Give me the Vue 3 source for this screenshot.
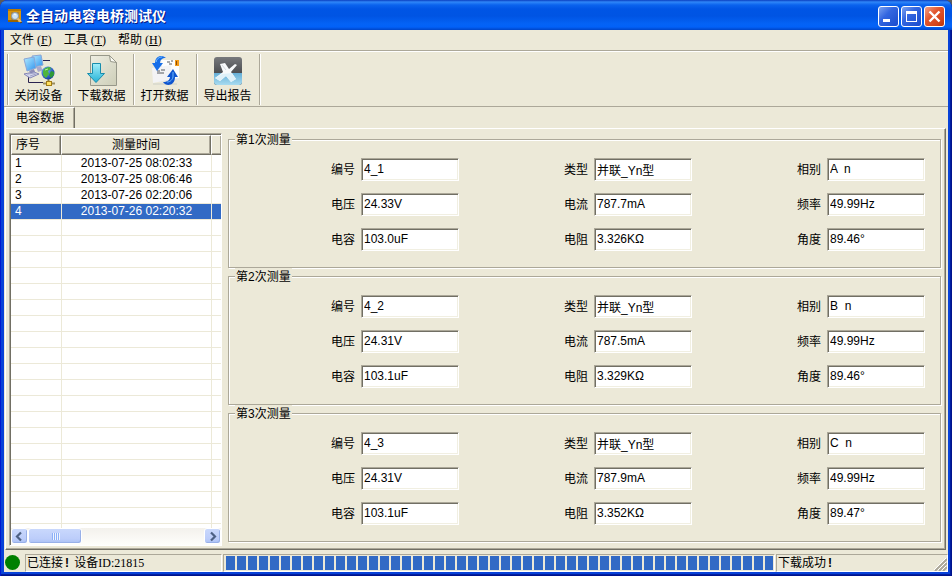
<script setup>
import { ref } from 'vue'

const menus = [
  { name: '文件', key: 'F' },
  { name: '工具', key: 'T' },
  { name: '帮助', key: 'H' },
]

const records = [
  { id: 1, time: '2013-07-25 08:02:33' },
  { id: 2, time: '2013-07-25 08:06:46' },
  { id: 3, time: '2013-07-26 02:20:06' },
  { id: 4, time: '2013-07-26 02:20:32' },
]
const selected = ref(4)

const labels = ['编号', '类型', '相别', '电压', '电流', '频率', '电容', '电阻', '角度']
const groups = ref([
  { n: 1, values: ['4_1', '并联_Yn型', 'A  n', '24.33V', '787.7mA', '49.99Hz', '103.0uF', '3.326KΩ', '89.46°'] },
  { n: 2, values: ['4_2', '并联_Yn型', 'B  n', '24.31V', '787.5mA', '49.99Hz', '103.1uF', '3.329KΩ', '89.46°'] },
  { n: 3, values: ['4_3', '并联_Yn型', 'C  n', '24.31V', '787.9mA', '49.99Hz', '103.1uF', '3.352KΩ', '89.47°'] },
])
</script>

<template>
  <div class="window">
    <header class="titlebar">
      <svg class="app-icon" width="16" height="16" viewBox="0 0 16 16">
        <path d="M1 1h13v13H1z" fill="#d8960c" />
        <path d="M1 1h13v2H1z" fill="#b87a04" />
        <path d="M1 12h10v2H1z" fill="#9c6400" />
        <path d="M4 4h8v8H4z" fill="#b0843a" />
        <circle cx="8" cy="8" r="3.500" fill="#cfe4f4" stroke="#8c98a2" />
        <path d="M7 6l2 1" stroke="#fff" />
        <path d="M10.500 10.500l4 4" stroke="#e9bd74" stroke-width="2" />
        <path d="M13 15l2-1" stroke="#4a3008" />
      </svg>
      <h1>全自动电容电桥测试仪</h1>
      <div class="caption-buttons">
        <button class="cap" aria-label="最小化">
          <svg width="19" height="19" viewBox="0 0 19 19"><path d="M4 12h7v3H4z" fill="#fff" /></svg>
        </button>
        <button class="cap" aria-label="最大化">
          <svg width="19" height="19" viewBox="0 0 19 19"><path d="M4 4h11v11H4zM5 7v7h9V7z" fill="#fff" fill-rule="evenodd" /></svg>
        </button>
        <button class="cap close" aria-label="关闭">
          <svg width="19" height="19" viewBox="0 0 19 19"><path d="M4.500 4.500l10 10M14.500 4.500l-10 10" stroke="#fff" stroke-width="2.400" /></svg>
        </button>
      </div>
    </header>

    <div class="client">
      <nav class="menubar">
        <button v-for="m in menus" :key="m.key" class="menu">{{ m.name }}<span class="mnemonic">(<u>{{ m.key }}</u>)</span></button>
      </nav>

      <div class="toolbar">
        <button class="tool">
          <svg width="32" height="32" viewBox="0 0 32 32">
            <defs>
              <linearGradient id="screen" x2="1" y2="1"><stop stop-color="#b4ecff" /><stop offset="1" stop-color="#2f93ee" /></linearGradient>
              <radialGradient id="globe" cx=".35" cy=".3" r=".8"><stop stop-color="#6fb4ff" /><stop offset="1" stop-color="#0a2f9c" /></radialGradient>
            </defs>
            <path d="M20 6.500h7M5.500 22v6.500H20" fill="none" stroke="#2a2350" />
            <path d="M9 2l9-1 2 10-9 2z" fill="url(#screen)" stroke="#8aa6d6" />
            <path d="M13 13l5-1 1 3 2 1-6 2z" fill="#a9a9cc" />
            <path d="M1 5l10-2 2 11-9 3z" fill="url(#screen)" stroke="#8aa6d6" />
            <path d="M6 17l5-2 1 3-4 2z" fill="#8e8eb8" />
            <path d="M1 20l10-2 5 2-9 4z" fill="#d4d6ec" stroke="#8486b4" />
            <path d="M4 20l8-1M7 22l6-2" stroke="#a0a2c8" />
            <path d="M25.500 25v3" stroke="#8d7b43" stroke-width="2" />
            <circle cx="25" cy="19" r="6.500" fill="url(#globe)" />
            <path d="M20 17c1-3 4-4 7-4l1 2-3 2 1 3-3 4c-2-1-3-3-3-5z" fill="#4db43c" />
            <path d="M28 17l3 1v3l-3 3-2-3z" fill="#2f9a36" />
            <path d="M22 16l3-1" stroke="#b8f0a0" />
            <path d="M20 29.500h12" stroke="#9a8c60" stroke-width="2" />
            <rect x="23.500" y="27.500" width="5" height="4" fill="#ffdf60" stroke="#a17b16" />
          </svg>
          <span>关闭设备</span>
        </button>
        <button class="tool">
          <svg width="32" height="32" viewBox="0 0 32 32">
            <defs>
              <linearGradient id="page" x2="1" y2="1"><stop stop-color="#eeeee2" /><stop offset="1" stop-color="#cdceb8" /></linearGradient>
              <linearGradient id="arrow" x2="0" y2="1"><stop stop-color="#a4effa" /><stop offset="1" stop-color="#24b2d6" /></linearGradient>
            </defs>
            <path d="M4.500 1.500h19l7 7v23h-26z" fill="url(#page)" stroke="#97988a" />
            <path d="M23.500 1.500l1 6 6 1z" fill="#fcfcf5" stroke="#97988a" />
            <path d="M6.500 9.500h8v10h4l-8.500 9-8.500-9h5z" fill="url(#arrow)" stroke="#188dad" />
          </svg>
          <span>下载数据</span>
        </button>
        <button class="tool">
          <svg width="32" height="32" viewBox="0 0 32 32">
            <path d="M4 29h24v2H4z" fill="#dcdccf" />
            <path d="M8 8l22-2v20l-20 2z" fill="#e2e4e8" />
            <path d="M12 6h18v18l-15 2z" fill="#fdfdfd" />
            <path d="M3 14l19-3 1 14-19 4z" fill="#f3f3f5" />
            <path d="M18 8h3M22 7h2M20 10h3M8 17h3M12 16h4M8 19h7" stroke="#55585f" />
            <rect x="26" y="6" width="4" height="6" fill="#f39a17" />
            <path d="M27.500 7v4" stroke="#8b4c0a" />
            <path d="M17 4C13 0 6 2 6 9H3l5 8 6-8h-3c0-3 2-5 6-5z" fill="#166ee9" />
            <path d="M14 28c3 5 12 4 12-5h3l-5-8-6 8h3c0 3-3 5-7 5z" fill="#0f55cf" />
            <path d="M7 8c1-4 4-5 6-5" fill="none" stroke="#80c6ff" />
            <path d="M24 18v5c-1 4-4 5-6 5" fill="none" stroke="#6eb9ff" />
          </svg>
          <span>打开数据</span>
        </button>
        <button class="tool">
          <svg width="32" height="32" viewBox="0 0 32 32">
            <defs>
              <linearGradient id="dark" x2="0" y2="1"><stop stop-color="#77797c" /><stop offset="1" stop-color="#2b2d31" /></linearGradient>
              <linearGradient id="water" x2="0" y2="1"><stop stop-color="#64aed6" /><stop offset="1" stop-color="#a8dbf0" /></linearGradient>
            </defs>
            <rect x="2" y="3" width="28" height="28" rx="3" fill="url(#dark)" />
            <path d="M2 19h28v9q0 3-3 3H5q-3 0-3-3z" fill="url(#water)" />
            <path d="M8 10l5-1 4 6 6-5 2 1-6 7 5 7-5 3-5-6-6 5-5-3 8-6z" fill="#f8fafb" />
            <path d="M10 20l10-1 4 6-5 3-5-6-6 5-5-3z" fill="#dff1f9" />
            <path d="M10 11l4 5" stroke="#d5dadf" />
          </svg>
          <span>导出报告</span>
        </button>
      </div>

      <div class="tabs" role="tablist">
        <button class="tab" role="tab" aria-selected="true">电容数据</button>
      </div>

      <main class="panel">
        <section class="list">
          <div class="list-body">
            <table>
              <colgroup><col class="c-id"><col class="c-time"><col></colgroup>
              <thead>
                <tr><th>序号</th><th class="center">测量时间</th><th></th></tr>
              </thead>
              <tbody>
                <tr v-for="r in records" :key="r.id" :class="{ selected: r.id === selected }" @click="selected = r.id">
                  <td>{{ r.id }}</td><td class="center">{{ r.time }}</td><td></td>
                </tr>
              </tbody>
            </table>
            <div class="blank-rows"></div>
          </div>
          <div class="scrollbar">
            <button class="scroll-btn" aria-label="向左滚动">
              <svg width="15" height="15" viewBox="0 0 15 15"><path d="M9 3.500l-4 4 4 4" fill="none" stroke="#4d6185" stroke-width="2.200" /></svg>
            </button>
            <div class="thumb"><i></i><i></i><i></i><i></i></div>
            <button class="scroll-btn right" aria-label="向右滚动">
              <svg width="15" height="15" viewBox="0 0 15 15"><path d="M6 3.500l4 4-4 4" fill="none" stroke="#4d6185" stroke-width="2.200" /></svg>
            </button>
          </div>
        </section>

        <section class="groups">
          <fieldset v-for="g in groups" :key="g.n">
            <legend>第{{ g.n }}次测量</legend>
            <div class="fields">
              <div v-for="(label, i) in labels" :key="label" class="field">
                <label :for="`f${g.n}-${i}`">{{ label }}</label>
                <input :id="`f${g.n}-${i}`" v-model="g.values[i]" type="text">
              </div>
            </div>
          </fieldset>
        </section>
      </main>

      <footer class="statusbar">
        <span class="led"></span>
        <div class="cell device">已连接<b>!</b> 设备<span class="serif">ID:21815</span></div>
        <div class="cell progress"><progress value="100" max="100" aria-label="下载进度"></progress></div>
        <div class="cell message">下载成功<b>!</b>
          <svg class="grip" width="13" height="13" viewBox="0 0 13 13">
            <path d="M1 13L13 1M5 13l8-8M9 13l4-4" stroke="#aca899" stroke-width="2" />
            <path d="M0 12L12 0M4 12l8-8M8 12l4-4" stroke="#fff" />
          </svg>
        </div>
      </footer>
    </div>
  </div>
</template>

<style>
body {
  margin: 0;
  background: #5a5a5a;
}
</style>

<style scoped>
* {
  box-sizing: border-box;
}

.window {
  display: flex;
  flex-direction: column;
  min-height: 100vh;
  padding: 0 4px 4px;
  border-radius: 8px 8px 0 0;
  background: #0842d8;
  box-shadow: inset 1px 0 #0019cf, inset -1px -1px #00138c, inset -2px -2px #001ea0;
  color: #000;
  font: 12px/16px "Liberation Sans", "Noto Sans CJK SC", sans-serif;
}

button {
  margin: 0;
  padding: 0;
  border: 0;
  background: none;
  color: inherit;
  font: inherit;
}

.titlebar {
  display: flex;
  align-items: center;
  height: 30px;
  margin: 0 -4px;
  padding: 2px 7px 0 7px;
  border-radius: 8px 8px 0 0;
  background: linear-gradient(#0a3fc0 0, #2f86f8 2px, #0a63ee 5px, #0055e5 9px, #0054e3 16px, #0463f6 24px, #0261f8 27px, #0045c8 30px);
}

.app-icon {
  margin-right: 3px;
}

h1 {
  flex: 1;
  margin: 0;
  color: #fff;
  font-size: 14px;
  line-height: 20px;
  font-weight: bold;
  text-shadow: 1px 1px #0a1883;
}

.caption-buttons {
  display: flex;
  gap: 2px;
}

.cap {
  width: 21px;
  height: 21px;
  border: 1px solid #fff;
  border-radius: 3px;
  background: linear-gradient(135deg, #7ba2f0, #3366e0 40%, #2457d4 75%, #1a4bd0);
}

.cap svg {
  display: block;
}

.close {
  background: linear-gradient(135deg, #f0a088, #e2572f 40%, #d4451c 75%, #b83408);
}

.client {
  flex: 1;
  display: flex;
  flex-direction: column;
  background: #ece9d8;
}

.menubar {
  display: flex;
  gap: 12px;
  height: 21px;
  padding: 2px 6px;
  border-bottom: 1px solid #aca899;
}

.mnemonic {
  margin-left: 3px;
}

.mnemonic,
.serif {
  font-family: "Liberation Serif", serif;
}

.toolbar {
  display: flex;
  height: 56px;
  padding: 2px 0 1px 3px;
  border-top: 1px solid #fff;
  border-bottom: 1px solid #aca899;
}

.toolbar::before {
  content: "";
  width: 1px;
  background: #aca899;
}

.tool {
  display: flex;
  flex-direction: column;
  align-items: center;
  gap: 2px;
  width: 63px;
  padding-right: 2px;
  border-left: 1px solid #fff;
  border-right: 1px solid #aca899;
}

.tool:last-child {
  box-shadow: 1px 0 #fff;
}

.tool svg {
  flex: none;
}

.tabs {
  display: flex;
  height: 21px;
  padding-left: 1px;
}

.tab {
  padding: 0 10px;
  border-left: 1px solid #fff;
  border-top: 1px solid #fff;
  border-right: 1px solid #716f64;
  box-shadow: inset -1px 0 #aca899;
}

.panel {
  flex: 1;
  display: flex;
  gap: 6px;
  margin: 0 2px 0 1px;
  padding: 2px 4px 3px 3px;
  border-left: 1px solid #fff;
  border-top: 1px solid #fff;
  border-right: 1px solid #716f64;
  border-bottom: 1px solid #716f64;
  box-shadow: inset -1px -1px #aca899;
}

.list {
  display: flex;
  flex-direction: column;
  width: 213px;
  margin-top: 2px;
  border: 1px solid #aca899;
  border-right-color: #fff;
  border-bottom-color: #fff;
  box-shadow: inset 1px 1px #716f64;
  padding: 1px 0 0 1px;
  background: #fff;
}

.list-body {
  flex: 1;
  display: flex;
  flex-direction: column;
}

table {
  width: 100%;
  table-layout: fixed;
  border-collapse: separate;
  border-spacing: 0;
}

.c-id {
  width: 50px;
}

.c-time {
  width: 150px;
}

th {
  height: 20px;
  padding: 0 4px;
  border-top: 1px solid #fff;
  border-left: 1px solid #fff;
  border-right: 1px solid #716f64;
  border-bottom: 1px solid #716f64;
  box-shadow: inset -1px -1px #aca899;
  background: #ece9d8;
  font-weight: normal;
  line-height: 16px;
  text-align: left;
}

th:last-child {
  border-right: 0;
}

th.center,
td.center {
  text-align: center;
}

td {
  height: 16px;
  padding: 0 4px;
  border-bottom: 1px solid #ece9d8;
  line-height: 15px;
}

td + td {
  border-left: 1px solid #ece9d8;
}

tbody tr:first-child td {
  height: 17px;
  padding-top: 1px;
}

.selected td {
  background: #316ac5;
  color: #fff;
}

.blank-rows {
  flex: 1;
  background:
    linear-gradient(#ece9d8, #ece9d8) 50px 0 / 1px 100% no-repeat,
    linear-gradient(#ece9d8, #ece9d8) 200px 0 / 1px 100% no-repeat,
    repeating-linear-gradient(#fff 0 15px, #ece9d8 15px 16px);
}

.scrollbar {
  display: flex;
  height: 17px;
  background: linear-gradient(#f3f1ec, #fefefb);
}

.scroll-btn,
.thumb {
  height: 16px;
  border: 1px solid #fff;
  border-radius: 3px;
  background: linear-gradient(#c9d8fc, #bccdfa 70%, #aac0f4);
  box-shadow: inset -1px -1px #98b0e8;
}

.scroll-btn {
  width: 17px;
}

.scroll-btn svg {
  display: block;
}

.scroll-btn.right {
  margin-left: auto;
}

.thumb {
  display: flex;
  justify-content: center;
  align-items: center;
  gap: 1px;
  width: 54px;
}

.thumb i {
  width: 1px;
  height: 7px;
  background: #8cb0f8;
  box-shadow: 1px 0 #eef4fe;
}

.groups {
  flex: 1;
  display: flex;
  flex-direction: column;
}

fieldset {
  min-width: 0;
  margin: 0;
  padding: 11px 15px 16px 0;
  border: 1px solid #aca899;
  box-shadow: 1px 1px #fff, inset 1px 1px #fff;
}

legend {
  margin-left: 6px;
  padding: 2px 1px 0;
  background: #ece9d8;
  line-height: 14px;
}

.fields {
  display: grid;
  grid-template-columns: repeat(3, 1fr);
  gap: 12px 3px;
}

.field {
  display: flex;
  justify-content: flex-end;
  align-items: center;
  gap: 6px;
}

.field label {
  padding-top: 1px;
}

.field input {
  width: 98px;
  height: 23px;
  padding: 0 2px 1px;
  border: 1px solid #aca899;
  border-right-color: #fff;
  border-bottom-color: #fff;
  border-radius: 0;
  outline: 0;
  background: #fff;
  box-shadow: inset 1px 1px #716f64, inset -1px -1px #f1efe2;
  color: #000;
  font: inherit;
}

.statusbar {
  display: flex;
  gap: 1px;
  padding: 4px 0 0 1px;
}

.led {
  width: 15px;
  height: 15px;
  margin: 1px 4px 0 0;
  border-radius: 50%;
  background: #008000;
}

.cell {
  height: 18px;
  padding-left: 1px;
  border: 1px solid #aca899;
  border-right-color: #fff;
  border-bottom-color: #fff;
  line-height: 16px;
  white-space: pre;
}

.cell b {
  margin: 0 2px;
}

.device {
  width: 197px;
}

.progress {
  flex: 1;
  padding: 1px 1px 1px 2px;
}

progress {
  display: block;
  width: 100%;
  height: 14px;
  appearance: none;
  border: 0;
}

progress::-webkit-progress-bar {
  background: none;
}

progress::-webkit-progress-value {
  background: repeating-linear-gradient(90deg, #316ac5 0 9px, transparent 9px 11px);
}

.message {
  display: flex;
  width: 172px;
}

.grip {
  align-self: flex-end;
  margin-left: auto;
}
</style>
